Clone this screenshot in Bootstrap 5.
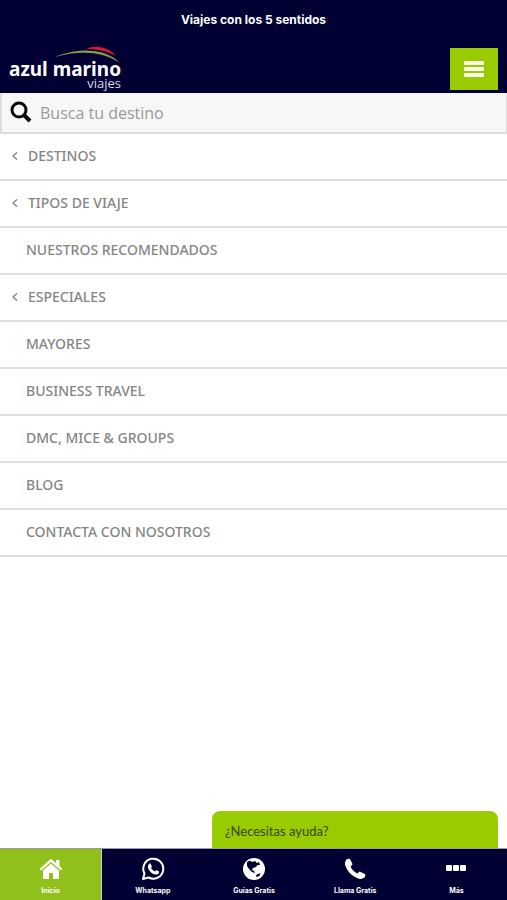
<!DOCTYPE html>
<html lang="es">
<head>
<meta charset="utf-8">
<meta name="viewport" content="width=device-width, initial-scale=1">
<title>Azul Marino Viajes</title>
<link href="https://cdn.jsdelivr.net/npm/bootstrap@5.3.0/dist/css/bootstrap.min.css" rel="stylesheet">
<style>
  :root { --navy: #000033; --lime: #99cc00; }
  body { font-family: "Open Sans", "Noto Sans", sans-serif; background: #fff; }
  .site-top { background: var(--navy); color: #fff; }
  .slogan { font: 700 12px/40px "Inter", sans-serif; }
  .brand-row { padding: 6px 9px 1px; }
  .brand-logo { width: 114px; height: 46px; }
  .menu-btn { width: 48px; height: 42px; background: var(--lime); }
  .search-bar { height: 41px; background: #f7f7f7; border: 1px solid #ddd; border-width: 0 1px 2px 2px; padding: 0 8px; gap: 8px; }
  .search-bar input { font-size: 16px; color: #555; padding: 0; }
  .search-bar input::placeholder { color: #999; opacity: 1; }
  .menu-list a { height: 47px; padding: 0 26px 2px; border-bottom: 2px solid #e0e0e0; color: #858585; font-family: "Noto Sans", sans-serif; font-size: 14px; line-height: 20px; font-weight: 500; }
  .menu-list a.has-sub { padding-left: 12px; gap: 10px; }
  .help-tab { width: 286px; height: 37px; margin-right: 9px; padding: 2px 13px 0; background: var(--lime); color: #34450a; border-radius: 8px 8px 0 0; font: 400 13px/20px "Lato", sans-serif; }
  .tab-bar { height: 52px; background: var(--navy); border-top: 1px solid #99a; }
  .tab-bar a { color: #fff; font: 700 7px/10px "Inter", sans-serif; padding-top: 8px; gap: 5px; }
  .tab-bar a.current { background: #92c01b; border-right: 1px solid #ccd; }
</style>
<script src="https://cdn.jsdelivr.net/npm/bootstrap@5.3.0/dist/js/bootstrap.bundle.min.js"></script>
</head>
<body class="d-flex flex-column min-vh-100">
<header class="site-top">
  <div class="slogan text-center">Viajes con los 5 sentidos</div>
  <div class="brand-row d-flex justify-content-between align-items-center">
    <a href="#" aria-label="azul marino viajes" class="d-flex">
      <svg class="brand-logo" viewBox="0 0 114 46">
        <path d="M77 3C87-2 101 2 107 10C98 5 89 3 77 3Z" fill="#dc1931"/>
        <path d="M46 11C67 2 96 1 111 17C94 5 70 4 46 11Z" fill="#899b43"/>
        <text x="0" y="30" font-family="Noto Sans, sans-serif" font-size="19" font-weight="700" fill="#fff">azul marino</text>
        <text x="112" y="42" text-anchor="end" font-family="Open Sans, sans-serif" font-size="13" font-weight="400" fill="#d8d8e6">viajes</text>
      </svg>
    </a>
    <button type="button" class="menu-btn border-0 p-0 d-flex align-items-center justify-content-center" aria-label="Menú">
      <svg width="20" height="18" fill="#fafde8"><rect y="1" width="20" height="4" rx="1"/><rect y="7" width="20" height="4" rx="1"/><rect y="13" width="20" height="4" rx="1"/></svg>
    </button>
  </div>
</header>
<form class="search-bar d-flex align-items-center" role="search">
  <svg width="22" height="24" viewBox="0 0 22 24" class="flex-shrink-0" fill="none" stroke="#080808"><circle cx="9" cy="9" r="7" stroke-width="3"/><path d="M14 14L20 20" stroke-width="4"/></svg>
  <input type="search" class="form-control border-0 bg-transparent shadow-none" placeholder="Busca tu destino" aria-label="Busca tu destino">
</form>
<nav class="menu-list d-flex flex-column" aria-label="Principal">
  <a href="#" class="has-sub d-flex align-items-center text-decoration-none"><svg width="6" height="8" fill="none" stroke="currentColor" stroke-width="1.500"><path d="M5 0.5L1 4L5 7.500"/></svg>DESTINOS</a>
  <a href="#" class="has-sub d-flex align-items-center text-decoration-none"><svg width="6" height="8" fill="none" stroke="currentColor" stroke-width="1.500"><path d="M5 0.5L1 4L5 7.500"/></svg>TIPOS DE VIAJE</a>
  <a href="#" class="d-flex align-items-center text-decoration-none">NUESTROS RECOMENDADOS</a>
  <a href="#" class="has-sub d-flex align-items-center text-decoration-none"><svg width="6" height="8" fill="none" stroke="currentColor" stroke-width="1.500"><path d="M5 0.5L1 4L5 7.500"/></svg>ESPECIALES</a>
  <a href="#" class="d-flex align-items-center text-decoration-none">MAYORES</a>
  <a href="#" class="d-flex align-items-center text-decoration-none">BUSINESS TRAVEL</a>
  <a href="#" class="d-flex align-items-center text-decoration-none">DMC, MICE &amp; GROUPS</a>
  <a href="#" class="d-flex align-items-center text-decoration-none">BLOG</a>
  <a href="#" class="d-flex align-items-center text-decoration-none">CONTACTA CON NOSOTROS</a>
</nav>
<footer class="mt-auto sticky-bottom d-flex flex-column">
  <button type="button" class="help-tab border-0 align-self-end text-start">¿Necesitas ayuda?</button>
  <nav class="tab-bar row g-0" aria-label="Accesos">
    <a href="#" class="current col d-flex flex-column align-items-center text-decoration-none" aria-current="page">
      <svg width="24" height="24" viewBox="0 0 24 24" fill="#fff"><path d="M0.500 12L11 2.500Q12 1.500 13 2.500L17 6V3H20.500V9L23.500 12L22 13.500L12 5L2 13.500Z"/><path d="M4 13.500L12 6.500L20 13.500V21Q20 22 19 22H14V16H10V22H5Q4 22 4 21Z"/></svg>Inicio</a>
    <a href="#" class="col d-flex flex-column align-items-center text-decoration-none">
      <svg width="24" height="24" viewBox="0 0 24 24"><path d="M2 22L3.500 16.500A10 10 0 1 1 7.500 20.500Z" fill="none" stroke="#fff" stroke-width="2" stroke-linejoin="round"/><path d="M8.500 6.500H9.500L11 9.500L10 11Q11.500 13.500 14 14.500L15.500 13L18 14.500Q18.500 17 15.500 17.500Q11 17.500 8 13Q5.500 9 8.500 6.500Z" fill="#fff"/></svg>Whatsapp</a>
    <a href="#" class="col d-flex flex-column align-items-center text-decoration-none">
      <svg width="24" height="24" viewBox="0 0 24 24"><circle cx="12" cy="12" r="11" fill="#fff"/><path d="M5 5L8 3.500L10 5L13 4L15 6L17 5L18 8L15.500 8L14 10L11 11L10 13L12 14L13 16L10 15L7 12L5 9Z M14 18L18.500 16L17.500 19L14.500 20Z" fill="#000033"/></svg>Guías Gratis</a>
    <a href="#" class="col d-flex flex-column align-items-center text-decoration-none">
      <svg width="24" height="24" viewBox="0 0 24 24"><path d="M3 3Q5 1 7 2L9.500 7Q9.500 8 7.500 9.500Q9.500 14 14.500 16.500L16.500 14.500L22 17Q23 18 21.500 20.500Q18 23 14 21Q5 17 2 8Q1.500 5 3 3Z" fill="#fff"/></svg>Llama Gratis</a>
    <a href="#" class="col d-flex flex-column align-items-center text-decoration-none">
      <svg width="24" height="24" viewBox="0 0 24 24" fill="#fff"><rect x="2" y="8" width="6" height="6" rx="1"/><rect x="9" y="8" width="6" height="6" rx="1"/><rect x="16" y="8" width="6" height="6" rx="1"/></svg>Más</a>
  </nav>
</footer>
</body>
</html>
